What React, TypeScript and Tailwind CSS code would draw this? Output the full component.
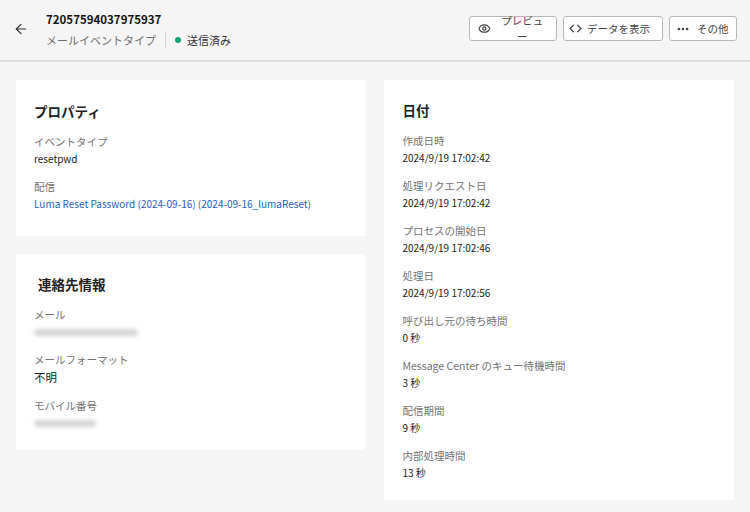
import React from 'react';
import { ArrowLeft, Eye, Code, MoreHorizontal } from 'lucide-react';

const font = { fontFamily: '"Noto Sans CJK JP", "Noto Sans", sans-serif' };

const Field = ({ label, children }: { label: string; children: React.ReactNode }) => (
  <div className="flex flex-col">
    <span className="text-[10.5px] leading-[17px] text-[#737373]">{label}</span>
    <div className="text-[10px] leading-[18px] text-[#222]">{children}</div>
  </div>
);

const Blur = ({ w }: { w: string }) => (
  <div className="h-[18px] flex items-center">
    <div className={`h-[7px] ${w} bg-[#d4d4d4] rounded blur-[2px]`} />
  </div>
);

export default function App() {
  const dates = [
    ['作成日時', '2024/9/19 17:02:42'],
    ['処理リクエスト日', '2024/9/19 17:02:42'],
    ['プロセスの開始日', '2024/9/19 17:02:46'],
    ['処理日', '2024/9/19 17:02:56'],
    ['呼び出し元の待ち時間', '0 秒'],
    ['Message Center のキュー待機時間', '3 秒'],
    ['配信期間', '9 秒'],
    ['内部処理時間', '13 秒'],
  ];

  return (
    <div className="w-[750px] h-[512px] bg-[#f5f5f5] overflow-hidden" style={font}>
      {/* Header */}
      <div className="h-[62px] border-b-2 border-[#dedede] flex items-start px-[13px] pt-[10px]">
        <ArrowLeft className="w-[16px] h-[16px] mt-[11px] text-[#333]" strokeWidth={1.8} />
        <div className="ml-[17px] flex flex-col">
          <span className="text-[11.5px] font-bold leading-[18px] text-[#111]">72057594037975937</span>
          <div className="flex items-center mt-[4px] text-[11px] text-[#6e6e6e]">
            <span>メールイベントタイプ</span>
            <span className="mx-[9px] h-[16px] border-l border-[#d5d5d5]" />
            <span className="w-[6px] h-[6px] rounded-full bg-[#12a36b] mr-[6px]" />
            <span className="text-[#333]">送信済み</span>
          </div>
        </div>
        <div className="ml-auto flex gap-[6px] mt-[6px]">
          <button className="h-[25px] w-[88px] px-[8px] flex items-center gap-[6px] border border-[#b8b8b8] rounded-[3px] bg-white text-[10.5px] text-[#444]">
            <Eye className="w-[13px] h-[13px]" strokeWidth={2.2} />プレビュー
          </button>
          <button className="h-[25px] w-[100px] px-[5px] flex items-center gap-[5px] border border-[#b8b8b8] rounded-[3px] bg-white text-[10.5px] text-[#444]">
            <Code className="w-[13px] h-[13px]" strokeWidth={2.2} />データを表示
          </button>
          <button className="h-[25px] w-[68px] px-[6px] flex items-center gap-[7px] border border-[#b8b8b8] rounded-[3px] bg-white text-[10.5px] text-[#444]">
            <MoreHorizontal className="w-[14px] h-[14px]" strokeWidth={2.5} />その他
          </button>
        </div>
      </div>

      {/* Body */}
      <div className="flex gap-[19px] px-[16px] pt-[18px]">
        <div className="w-[350px] flex flex-col gap-[18px]">
          <div className="bg-white h-[156px] px-[18px] pt-[21px] flex flex-col gap-[10px]">
            <h2 className="text-[13.5px] font-bold leading-[20px] text-[#222] mb-[2px]">プロパティ</h2>
            <Field label="イベントタイプ">resetpwd</Field>
            <Field label="配信">
              <span className="text-[#1f5fbf]">Luma Reset Password (2024-09-16) (2024-09-16_lumaReset)</span>
            </Field>
          </div>
          <div className="bg-white h-[196px] px-[18px] pt-[20px] flex flex-col gap-[10px]">
            <h2 className="text-[13.5px] font-bold leading-[20px] text-[#222] ml-[4px] mb-[2px]">連絡先情報</h2>
            <Field label="メール"><Blur w="w-[104px]" /></Field>
            <Field label="メールフォーマット"><span className="text-[11.5px]">不明</span></Field>
            <Field label="モバイル番号"><Blur w="w-[62px]" /></Field>
          </div>
        </div>
        <div className="w-[350px] h-[420px] bg-white px-[18px] pt-[20px] flex flex-col gap-[10px]">
          <h2 className="text-[13.5px] font-bold leading-[20px] text-[#222] mb-[2px]">日付</h2>
          {dates.map(([l, v]) => (
            <Field key={l} label={l}>{v}</Field>
          ))}
        </div>
      </div>
    </div>
  );
}
